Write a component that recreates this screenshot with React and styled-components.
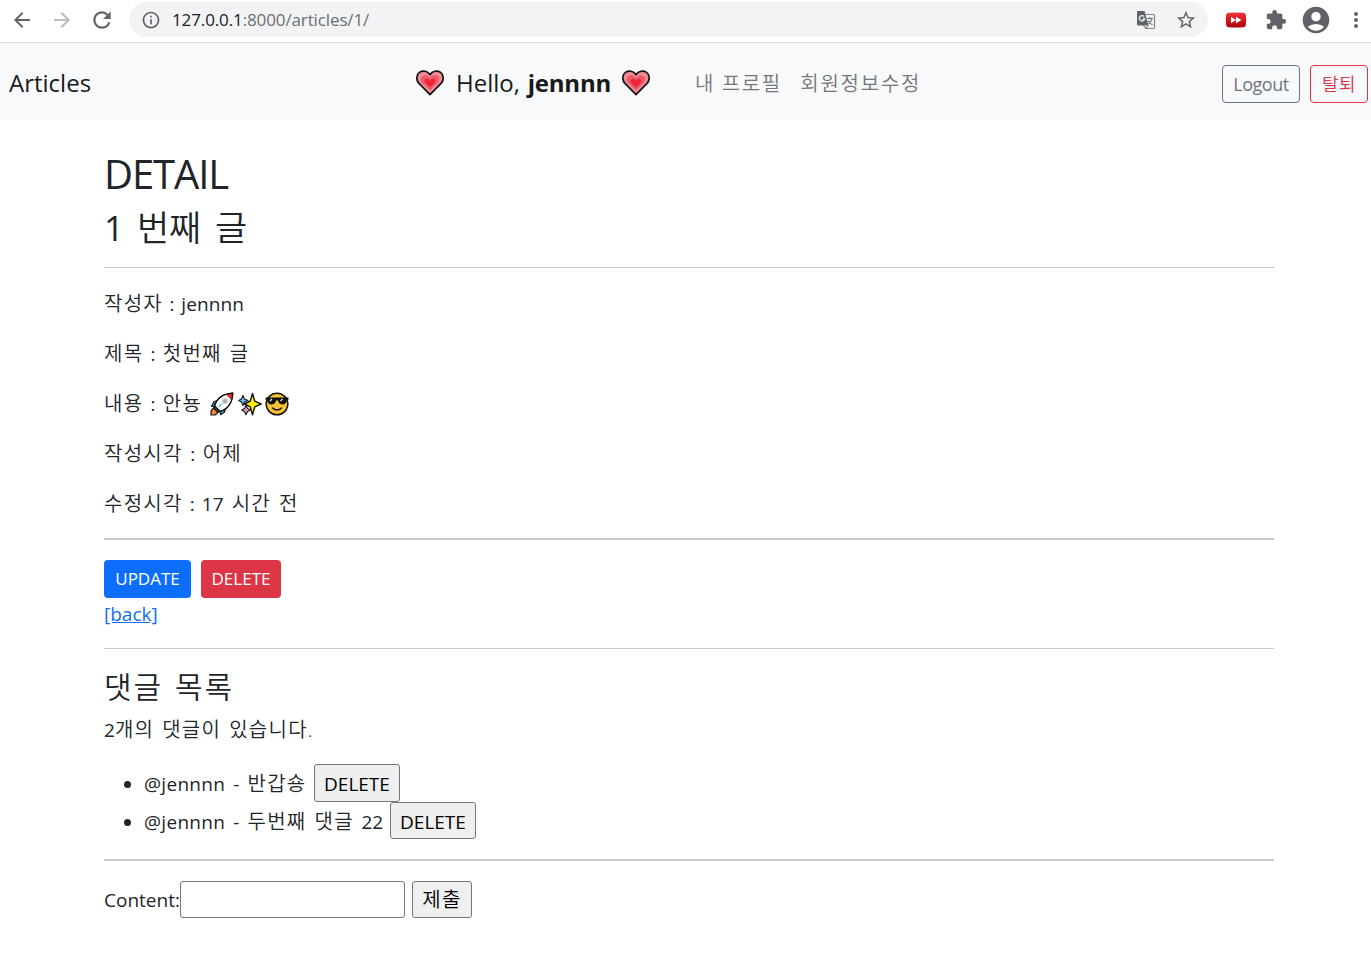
import React from "react";
import styled, { createGlobalStyle } from "styled-components";
import {
  MdArrowBack, MdArrowForward, MdRefresh, MdInfoOutline,
  MdStarBorder, MdExtension, MdAccountCircle, MdMoreVert,
} from "react-icons/md";

const Global = createGlobalStyle`
  *, *::before, *::after { box-sizing: border-box; }
  body {
    margin: 0;
    background: #fff;
    color: #212529;
    font-family: "Open Sans", "Noto Sans CJK KR", sans-serif;
    font-size: 19px;
    line-height: 30px;
  }
`;

const Toolbar = styled.header`
  display: flex;
  align-items: center;
  height: 43px;
  padding: 0 0 3px 1px;
  border-bottom: 1px solid #d9dbde;
  overflow: hidden;
`;
const IconSlot = styled.span`
  display: flex;
  flex: 0 0 40px;
  justify-content: center;
  align-items: center;
  padding-left: 1px;
  color: ${(p) => p.$color || "#5f6368"};
`;
const AddressBar = styled.div`
  display: flex;
  flex: 0 0 1079px;
  align-items: center;
  height: 35px;
  margin: 0 7px 0 8px;
  padding: 0 3px 0 12px;
  border-radius: 18px;
  background: #f1f3f4;
`;
const Url = styled.div`
  flex: 1;
  margin-left: 11px;
  font-size: 17px;
  letter-spacing: -0.12px;
  color: #6b6f73;
`;
const Host = styled.span`
  color: #202124;
`;

const Navbar = styled.nav`
  display: flex;
  align-items: center;
  height: 77px;
  padding: 3px 3px 0 9px;
  background: #f8f9fb;
`;
const Brand = styled.div`
  width: 407px;
  font-size: 24px;
  color: #18191a;
`;
const Greeting = styled.div`
  display: flex;
  align-items: center;
  width: 279px;
  font-size: 24px;
  color: #18191a;
  svg { flex: none; }
`;
const Hello = styled.span`
  width: 166px;
  margin-left: 12px;
  white-space: nowrap;
  word-spacing: 1.5px;
`;
const Name = styled.b`
  letter-spacing: -0.2px;
`;
const NavLinks = styled.div`
  display: flex;
  flex: 1;
  gap: 18.500px;
  padding-top: 1px;
  color: #757677;
`;
const NavButton = styled.button`
  width: ${(p) => p.$width}px;
  height: 38px;
  margin: 1px 0 0 10px;
  padding: 0;
  border: 1px solid ${(p) => p.$color};
  border-radius: 4px;
  background: transparent;
  color: ${(p) => p.$color};
  font: ${(p) => p.$weight} 18px/37px "Open Sans", "Noto Sans CJK KR", sans-serif;
  letter-spacing: ${(p) => p.$ls || 0}px;
`;

const Container = styled.main`
  width: 1170px;
  margin-left: 104px;
  padding-top: 30px;
`;
const Title = styled.h1`
  margin: 0 0 8px;
  font-size: 40px;
  line-height: 48px;
  font-weight: 400;
  letter-spacing: -1.1px;
`;
const Subtitle = styled.h2`
  margin: 0 0 -2px;
  font-size: 35px;
  line-height: 43px;
  font-weight: 350;
  letter-spacing: -0.3px;
  word-spacing: 5.3px;
`;
const Ordinal = styled.span`
  font-weight: 400;
  letter-spacing: -1px;
`;
const SectionTitle = styled.h3`
  margin: 0 0 10px;
  font-size: 30px;
  line-height: 35px;
  font-weight: 350;
  letter-spacing: 2px;
  word-spacing: 2px;
`;
const Rule = styled.hr`
  height: ${(p) => p.$h || 1}px;
  margin: 20px 0;
  border: 0;
  background: #c8c9ca;
`;
const Line = styled.p`
  margin: 0 0 20px;
  height: 30px;
  line-height: 32px;
  white-space: nowrap;
  svg { margin-right: 3.500px; vertical-align: -5px; }
`;
const Latin = styled.span`
  letter-spacing: ${(p) => p.$ls || 0}px;
  word-spacing: ${(p) => p.$ws || 0}px;
`;
const Korean = styled.span`
  font-size: 20px;
  font-weight: 350;
  letter-spacing: ${(p) => p.$ls || 1.25}px;
  word-spacing: ${(p) => (p.$ws === undefined ? 1.6 : p.$ws)}px;
`;
const Actions = styled.div`
  display: flex;
  gap: 10px;
`;
const ActionButton = styled.button`
  width: ${(p) => p.$width}px;
  height: 38px;
  padding: 0;
  border: 0;
  border-radius: 4px;
  background: ${(p) => p.$bg};
  color: #fff;
  font: 400 17px/38px "Open Sans", sans-serif;
`;
const Back = styled.a`
  display: block;
  width: max-content;
  height: 30px;
  line-height: 32px;
  color: #0d6efd;
  text-decoration: underline;
`;
const Comments = styled.ul`
  margin: 0;
  padding-left: 40px;
`;
const Comment = styled.li`
  height: 37.5px;
  line-height: 40px;
  white-space: nowrap;
`;
const PlainButton = styled.button`
  width: ${(p) => p.$width}px;
  height: ${(p) => p.$height || 38}px;
  margin-left: ${(p) => p.$ml || 0}px;
  padding: 0;
  border: 1px solid #767676;
  border-radius: 3px;
  background: #efefef;
  color: #000;
  font: inherit;
  line-height: ${(p) => p.$lh || 38}px;
  vertical-align: top;
`;
const Form = styled.form`
  display: flex;
  align-items: center;
`;
const Label = styled.label`
  width: 76px;
  white-space: nowrap;
`;
const Input = styled.input`
  width: 225px;
  height: 37px;
  border: 1px solid #767676;
  border-radius: 3px;
`;

const Translate = () => (
  <svg width="20" height="20" viewBox="0 0 20 20" fill="none">
    <path d="M9 4.500H17.500Q18.500 4.500 18.500 5.500V17.500Q18.500 18.500 17.500 18.500H9.500L7.500 15" stroke="#85888b" strokeWidth="1.200" />
    <path d="M2 1H8.500L12.500 15.500H2Q1 15.500 1 14.500V2Q1 1 2 1Z" fill="#5f6368" />
    <path d="M8.200 6.600A2.700 2.700 0 1 0 8.700 8.900H6.300" stroke="#f1f3f4" strokeWidth="1.300" />
    <path d="M11 8.500H17M14 7V8.500M16 8.500Q15 12 12.300 14M12 10.500Q14 13.500 16.500 15" stroke="#74787c" strokeWidth="1.100" />
    <path d="M9.500 18.500 12.500 15.500" stroke="#5f6368" />
  </svg>
);
const Heart = () => (
  <svg width="28" height="26" viewBox="0 0 28 26">
    <path d="M14 24.600 2.700 13.200C-.2 9.700.4 4.600 3.400 2.400 6.900 0 11.600.900 14 4.700 16.400.900 21.100 0 24.600 2.400 27.600 4.600 28.200 9.700 25.300 13.200Z" fill="#ee8b96" stroke="#151515" strokeWidth="1.7" strokeLinejoin="round" />
    <path d="M14 20.600 6 12.500C3.800 9.700 4.900 6.300 7.700 5.500 10.300 4.800 12.700 6 14 8.300 15.300 6 17.700 4.800 20.300 5.500 23.100 6.300 24.200 9.700 22 12.500Z" fill="#ea5a69" />
    <path d="M14 17.600 9.200 12.800C7.800 11 8.800 9 10.500 8.800 12 8.600 13.300 9.500 14 10.800 14.700 9.500 16 8.600 17.500 8.800 19.200 9 20.200 11 18.800 12.800Z" fill="#f02436" />
  </svg>
);
const Rocket = () => (
  <svg width="24" height="24" viewBox="0 0 24 24" stroke="#151515" strokeWidth="1.200" strokeLinejoin="round">
    <path d="M8 8.500 4 9.500 1.500 14.500 6 14Z M15.500 16 14.500 20 10.500 22.700 9.800 18Z" fill="#2fb4e8" />
    <path d="M4 15.500 1 19 1 23 5 23 8.500 20Z" fill="#f58a2b" />
    <path d="M4.500 14C6.500 7.500 12 1.800 22.800 1.200 22.200 12 16.500 17.500 10 19.500Z" fill="#fff" />
    <path d="M16 2.500Q19 1.300 22.800 1.200 22.700 5 21.500 8Z" fill="#e4212b" stroke="none" />
    <path d="M4.500 14 10 19.500 7.500 20 4 16.500Z" fill="#555" />
    <circle cx="15" cy="9" r="2.500" fill="#a9acae" stroke="#d5d6d7" />
    <path d="M8.500 15 12 11.500" stroke="#53c5ef" />
    <path d="M4.500 14C6.500 7.500 12 1.800 22.800 1.200 22.200 12 16.500 17.500 10 19.500" fill="none" />
  </svg>
);
const Sparkles = () => (
  <svg width="24" height="24" viewBox="0 0 24 24" stroke="#151515" strokeLinejoin="round">
    <path d="M14.500 1.500 16.800 9.200 23.200 12 16.800 14.800 14.500 22.800 12.200 14.800 6.500 12 12.200 9.200Z" fill="#fdea14" strokeWidth="1.400" />
    <path d="M5 3.500 6.500 7 10 8.500 6.500 10 5 13.500 3.500 10 .8 8.500 3.500 7Z" fill="#5cc8f2" strokeWidth="1.100" />
    <path d="M8 13.200 9.500 16.500 12.500 18 9.500 19.500 8 22.800 6.500 19.500 3.800 18 6.500 16.500Z" fill="#f29ac0" strokeWidth="1.100" />
  </svg>
);
const Cool = () => (
  <svg width="24" height="24" viewBox="0 0 24 24">
    <circle cx="12" cy="12" r="10.800" fill="#fcc435" stroke="#151515" strokeWidth="1.500" />
    <path d="M.500 5.500H23.500V7.500L21.500 8.500C21 12 19 12.800 17 12.500 14.500 12.200 13.500 10.500 13 8.500H11C10.500 10.500 9.500 12.200 7 12.500 5 12.800 3 12 2.500 8.500L.500 7.500Z" fill="#111" />
    <path d="M5 9 7 7M15.500 9 17.500 7" stroke="#eee" strokeWidth="1.200" />
    <path d="M7.500 16Q12 20 16.500 16" fill="none" stroke="#111" strokeWidth="1.500" strokeLinecap="round" />
  </svg>
);
const FastForward = () => (
  <svg width="22" height="16" viewBox="0 0 22 16">
    <defs>
      <linearGradient id="ff" x1="0" y1="0" x2="0" y2="1">
        <stop offset="0" stopColor="#f5343a" />
        <stop offset="1" stopColor="#a80008" />
      </linearGradient>
    </defs>
    <path d="M4 .800Q11 .100 18 .800 21 1 21 4 21.400 8 21 12 21 15 18 15.200 11 15.900 4 15.200 1 15 1 12 .600 8 1 4 1 1 4 .800Z" fill="url(#ff)" />
    <path d="M6 4.800 11 8 6 11.200ZM11 4.800 16.500 8 11 11.200Z" fill="#fff" />
  </svg>
);

export default function App() {
  return (
    <>
      <Global />
      <Toolbar>
        <IconSlot><MdArrowBack size={24} /></IconSlot>
        <IconSlot $color="#babcbe"><MdArrowForward size={24} /></IconSlot>
        <IconSlot><MdRefresh size={26} /></IconSlot>
        <AddressBar>
          <MdInfoOutline size={20} color="#5f6368" />
          <Url><Host>127.0.0.1</Host>:8000/articles/1/</Url>
          <IconSlot><Translate /></IconSlot>
          <IconSlot><MdStarBorder size={22} /></IconSlot>
        </AddressBar>
        <IconSlot><FastForward /></IconSlot>
        <IconSlot><MdExtension size={22} /></IconSlot>
        <IconSlot><MdAccountCircle size={32} /></IconSlot>
        <IconSlot><MdMoreVert size={24} /></IconSlot>
      </Toolbar>
      <Navbar>
        <Brand>Articles</Brand>
        <Greeting>
          <Heart />
          <Hello>Hello, <Name>jennnn</Name></Hello>
          <Heart />
        </Greeting>
        <NavLinks>
          <Korean $ls={1.6} $ws={0}>내 프로필</Korean>
          <Korean $ls={1.75}>회원정보수정</Korean>
        </NavLinks>
        <NavButton $color="#6c757d" $width={78} $weight={400} $ls={-0.5}>Logout</NavButton>
        <NavButton $color="#dc3545" $width={58} $weight={350} $ls={0.5}>탈퇴</NavButton>
      </Navbar>
      <Container>
        <Title>DETAIL</Title>
        <Subtitle><Ordinal>1</Ordinal> 번째 글</Subtitle>
        <Rule />
        <Line><Korean>작성자</Korean><Latin $ws={1.6} $ls={0.1}> : jennnn</Latin></Line>
        <Line><Korean>제목</Korean><Latin $ws={2.3}> : </Latin><Korean>첫번째 글</Korean></Line>
        <Line><Korean>내용</Korean><Latin $ws={2.3}> : </Latin><Korean>안뇽 </Korean><Rocket /><Sparkles /><Cool /></Line>
        <Line><Korean>작성시각</Korean><Latin $ws={2.6}> : </Latin><Korean>어제</Korean></Line>
        <Line><Korean>수정시각</Korean><Latin $ws={2.2}> : 17</Latin><Korean> 시간 전</Korean></Line>
        <Rule $h={2} />
        <Actions>
          <ActionButton $bg="#0d6efd" $width={87}>UPDATE</ActionButton>
          <ActionButton $bg="#dc3545" $width={80}>DELETE</ActionButton>
        </Actions>
        <Back>[back]</Back>
        <Rule />
        <SectionTitle>댓글 목록</SectionTitle>
        <Line><Latin>2</Latin><Korean>개의 댓글이 있습니다.</Korean></Line>
        <Comments>
          <Comment>
            <Latin $ls={0.3} $ws={2.7}>@jennnn - </Latin><Korean>반갑숑</Korean>
            <PlainButton $width={86} $ml={7.5}>DELETE</PlainButton>
          </Comment>
          <Comment>
            <Latin $ls={0.3} $ws={2.7}>@jennnn - </Latin><Korean>두번째 댓글</Korean><Latin $ws={2.7}> 22</Latin>
            <PlainButton $width={86} $height={37} $ml={6.8}>DELETE</PlainButton>
          </Comment>
        </Comments>
        <Rule $h={2} />
        <Form>
          <Label>Content:</Label>
          <Input />
          <PlainButton type="button" $width={60} $height={37} $lh={36} $ml={7}><Korean>제출</Korean></PlainButton>
        </Form>
      </Container>
    </>
  );
}
